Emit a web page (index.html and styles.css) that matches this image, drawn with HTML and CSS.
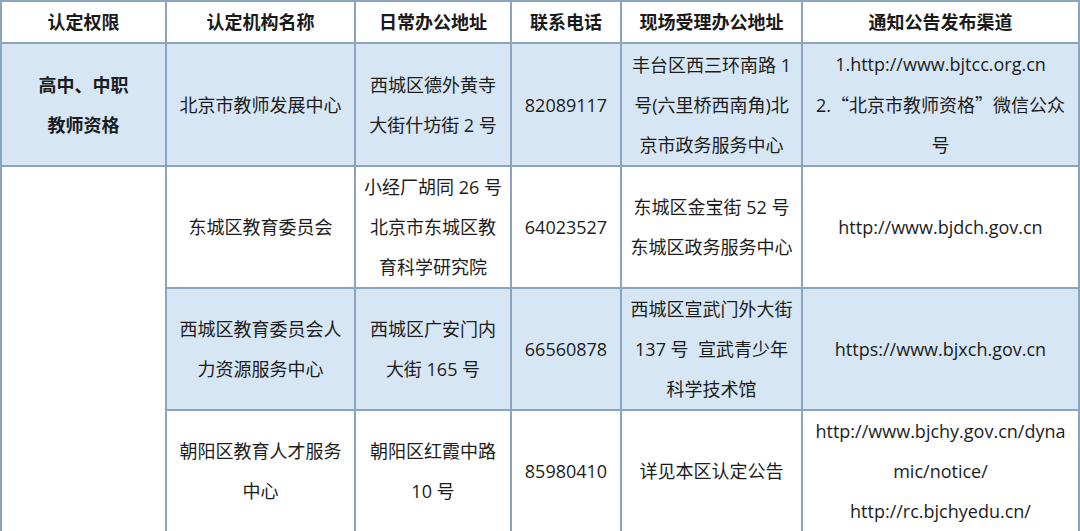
FILE: index.html
```html
<!DOCTYPE html>
<html lang="zh-CN">
<head>
<meta charset="utf-8">
<title>认定机构</title>
<link rel="stylesheet" href="styles.css">
</head>
<body>
<table class="grid">
  <colgroup>
    <col class="c1"><col class="c2"><col class="c3"><col class="c4"><col class="c5"><col class="c6">
  </colgroup>
  <thead>
    <tr class="head">
      <th>认定权限</th>
      <th>认定机构名称</th>
      <th>日常办公地址</th>
      <th>联系电话</th>
      <th>现场受理办公地址</th>
      <th>通知公告发布渠道</th>
    </tr>
  </thead>
  <tbody>
    <tr class="blue r1">
      <td class="bold">高中、中职<br>教师资格</td>
      <td>北京市教师发展中心</td>
      <td>西城区德外黄寺<br>大街什坊街 2 号</td>
      <td>82089117</td>
      <td>丰台区西三环南路 1<br>号(六里桥西南角)北<br>京市政务服务中心</td>
      <td>1.http://www.bjtcc.org.cn<br>2.<span class="cjk">“</span>北京市教师资格<span class="cjk">”</span>微信公众<br>号</td>
    </tr>
    <tr class="white r2">
      <td rowspan="3" class="span"></td>
      <td>东城区教育委员会</td>
      <td>小经厂胡同 26 号<br>北京市东城区教<br>育科学研究院</td>
      <td>64023527</td>
      <td>东城区金宝街 52 号<br>东城区政务服务中心</td>
      <td>http://www.bjdch.gov.cn</td>
    </tr>
    <tr class="blue r3">
      <td>西城区教育委员会人<br>力资源服务中心</td>
      <td>西城区广安门内<br>大街 165 号</td>
      <td>66560878</td>
      <td>西城区宣武门外大街<br>137 号&nbsp; 宣武青少年<br>科学技术馆</td>
      <td>https://www.bjxch.gov.cn</td>
    </tr>
    <tr class="white r4">
      <td>朝阳区教育人才服务<br>中心</td>
      <td>朝阳区红霞中路<br>10 号</td>
      <td>85980410</td>
      <td>详见本区认定公告</td>
      <td>http://www.bjchy.gov.cn/dyna<br>mic/notice/<br>http://rc.bjchyedu.cn/</td>
    </tr>
  </tbody>
</table>
</body>
</html>
```

FILE: styles.css
```css
html, body {
  margin: 0;
  padding: 0;
  background: #ffffff;
}

.grid {
  border-collapse: collapse;
  table-layout: fixed;
  width: 1078px;
  margin: 0;
  font-family: "Open Sans", "Noto Sans CJK SC", sans-serif;
  font-size: 18px;
  color: #1c1c1c;
}

.c1 { width: 165px; }
.c2 { width: 189px; }
.c3 { width: 156px; }
.c4 { width: 110px; }
.c5 { width: 181px; }
.c6 { width: 277px; }

.grid th,
.grid td {
  border: 2px solid #8ba5bd;
  text-align: center;
  vertical-align: middle;
  padding: 0;
  line-height: 40px;
  white-space: nowrap;
}

.grid th {
  font-weight: bold;
  height: 40px;
  line-height: 40px;
  background: #ffffff;
  color: #1a1a1a;
}

.blue td { background: #d6e6f4; }
.white td { background: #ffffff; }
.grid td.span { background: #ffffff; }

.bold { font-weight: bold; }

.cjk { font-family: "Noto Sans CJK SC", sans-serif; }

.r1 td { height: 121px; }
.r2 td { height: 120px; }
.r3 td { height: 119px; }
.r4 td { height: 119px; }
```
